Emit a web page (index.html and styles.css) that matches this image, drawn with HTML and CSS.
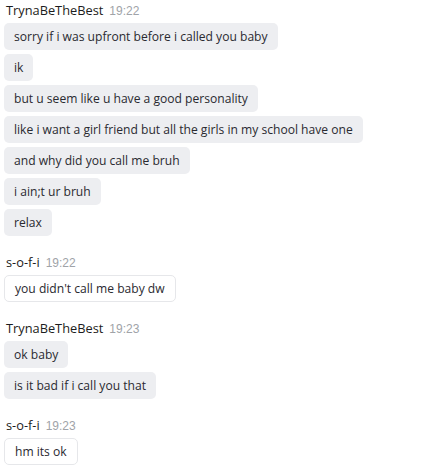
FILE: index.html
```html
<!DOCTYPE html>
<html>
<head>
<meta charset="utf-8">
<link rel="stylesheet" href="styles.css">
</head>
<body>
<div class="chat">
  <div class="group">
    <div class="head"><span class="name">TrynaBeTheBest</span><span class="time">19:22</span></div>
    <div class="bubble">sorry if i was upfront before i called you baby</div>
    <div class="bubble">ik</div>
    <div class="bubble">but u seem like u have a good personality</div>
    <div class="bubble">like i want a girl friend but all the girls in my school have one</div>
    <div class="bubble">and why did you call me bruh</div>
    <div class="bubble">i ain;t ur bruh</div>
    <div class="bubble">relax</div>
  </div>
  <div class="group">
    <div class="head"><span class="name">s-o-f-i</span><span class="time">19:22</span></div>
    <div class="bubble own">you didn't call me baby dw</div>
  </div>
  <div class="group">
    <div class="head"><span class="name">TrynaBeTheBest</span><span class="time">19:23</span></div>
    <div class="bubble">ok baby</div>
    <div class="bubble">is it bad if i call you that</div>
  </div>
  <div class="group">
    <div class="head"><span class="name">s-o-f-i</span><span class="time">19:23</span></div>
    <div class="bubble own">hm its ok</div>
  </div>
</div>
</body>
</html>
```
FILE: styles.css
```css
html, body {
  margin: 0;
  padding: 0;
  background: #ffffff;
}
body {
  font-family: "Open Sans", "Noto Sans", sans-serif;
  color: #2a2a30;
}
.chat {
  display: flex;
  flex-direction: column;
  gap: 18px;
  padding: 2px 4px 0 4px;
}
.group {
  display: flex;
  flex-direction: column;
  align-items: flex-start;
  gap: 4px;
}
.head {
  display: flex;
  align-items: baseline;
  gap: 6px;
  height: 16px;
  line-height: 16px;
  padding-left: 2px;
  margin-bottom: 1px;
}
.name {
  font-size: 12.8px;
  color: #1c1c20;
}
.time {
  font-family: "Liberation Sans", Arial, sans-serif;
  font-size: 12px;
  color: #a0a3a8;
}
.bubble {
  box-sizing: border-box;
  height: 27px;
  line-height: 27px;
  padding: 0 10px;
  font-size: 12.1px;
  background: #edeef1;
  border-radius: 5px;
  white-space: nowrap;
}
.bubble.own {
  background: #ffffff;
  border: 1px solid #e6e7ea;
  line-height: 25px;
}
```
